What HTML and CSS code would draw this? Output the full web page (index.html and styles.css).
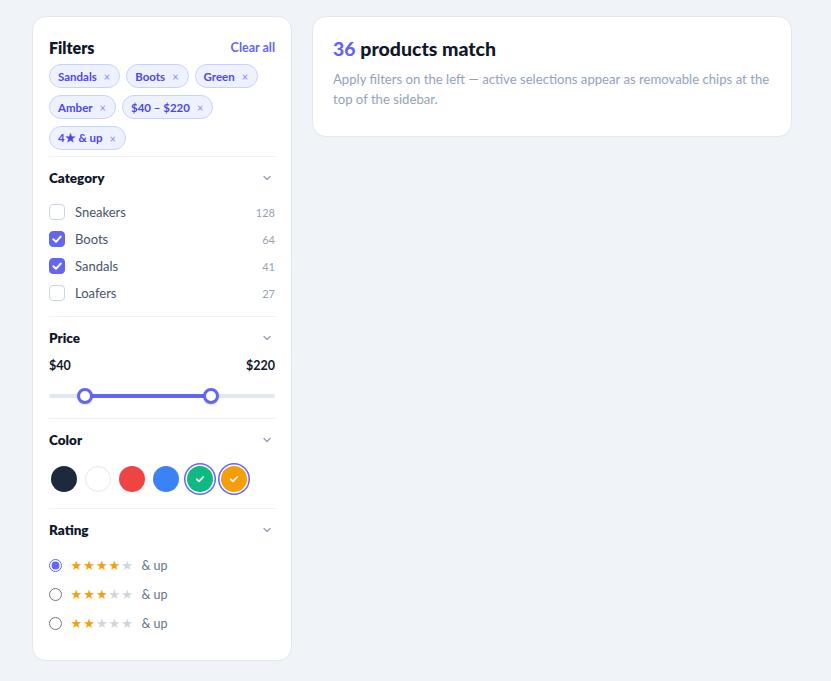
FILE: index.html
```html
<!DOCTYPE html>
<html lang="en">
<head>
<meta charset="utf-8">
<title>Filters</title>
<link rel="stylesheet" href="styles.css">
</head>
<body>
<div class="page">
  <aside class="sidebar">
    <div class="sb-head">
      <h2 class="sb-title">Filters</h2>
      <a class="clear" href="#">Clear all</a>
    </div>
    <div class="chips">
      <span class="chip">Sandals <span class="x">×</span></span>
      <span class="chip">Boots <span class="x">×</span></span>
      <span class="chip">Green <span class="x">×</span></span>
      <span class="chip">Amber <span class="x">×</span></span>
      <span class="chip">$40 – $220 <span class="x">×</span></span>
      <span class="chip">4★ &amp; up <span class="x">×</span></span>
    </div>

    <section class="sec">
      <div class="sec-head">
        <h3>Category</h3>
        <svg class="chev" width="12" height="12" viewBox="0 0 12 12"><path d="M3 4.5 6 7.5 9 4.5" fill="none" stroke="#94a3b8" stroke-width="1.4" stroke-linecap="round" stroke-linejoin="round"/></svg>
      </div>
      <ul class="checks">
        <li class="check-row"><span class="cb"></span><span class="lbl">Sneakers</span><span class="cnt">128</span></li>
        <li class="check-row"><span class="cb on"><svg width="16" height="16" viewBox="0 0 16 16"><path d="M4.3 8.3 7 10.8 11.7 5.6" fill="none" stroke="#fff" stroke-width="2" stroke-linecap="round" stroke-linejoin="round"/></svg></span><span class="lbl">Boots</span><span class="cnt">64</span></li>
        <li class="check-row"><span class="cb on"><svg width="16" height="16" viewBox="0 0 16 16"><path d="M4.3 8.3 7 10.8 11.7 5.6" fill="none" stroke="#fff" stroke-width="2" stroke-linecap="round" stroke-linejoin="round"/></svg></span><span class="lbl">Sandals</span><span class="cnt">41</span></li>
        <li class="check-row"><span class="cb"></span><span class="lbl">Loafers</span><span class="cnt">27</span></li>
      </ul>
    </section>

    <section class="sec">
      <div class="sec-head">
        <h3>Price</h3>
        <svg class="chev" width="12" height="12" viewBox="0 0 12 12"><path d="M3 4.5 6 7.5 9 4.5" fill="none" stroke="#94a3b8" stroke-width="1.4" stroke-linecap="round" stroke-linejoin="round"/></svg>
      </div>
      <div class="price-vals"><span>$40</span><span>$220</span></div>
      <div class="slider">
        <div class="track"></div>
        <div class="fill" style="left:36px;width:126px"></div>
        <span class="thumb" style="left:28px"></span>
        <span class="thumb" style="left:154px"></span>
      </div>
    </section>

    <section class="sec">
      <div class="sec-head">
        <h3>Color</h3>
        <svg class="chev" width="12" height="12" viewBox="0 0 12 12"><path d="M3 4.5 6 7.5 9 4.5" fill="none" stroke="#94a3b8" stroke-width="1.4" stroke-linecap="round" stroke-linejoin="round"/></svg>
      </div>
      <div class="swatches">
        <span class="sw c-dark"></span>
        <span class="sw c-white"></span>
        <span class="sw c-red"></span>
        <span class="sw c-blue"></span>
        <span class="sw c-green sel"><svg width="12" height="12" viewBox="0 0 12 12"><path d="M2.6 6.2 5 8.4 9.4 3.8" fill="none" stroke="#fff" stroke-width="1.6" stroke-linecap="round" stroke-linejoin="round"/></svg></span>
        <span class="sw c-amber sel"><svg width="12" height="12" viewBox="0 0 12 12"><path d="M2.6 6.2 5 8.4 9.4 3.8" fill="none" stroke="#fff" stroke-width="1.6" stroke-linecap="round" stroke-linejoin="round"/></svg></span>
      </div>
    </section>

    <section class="sec">
      <div class="sec-head">
        <h3>Rating</h3>
        <svg class="chev" width="12" height="12" viewBox="0 0 12 12"><path d="M3 4.5 6 7.5 9 4.5" fill="none" stroke="#94a3b8" stroke-width="1.4" stroke-linecap="round" stroke-linejoin="round"/></svg>
      </div>
      <ul class="ratings">
        <li class="rate-row"><input type="radio" name="r" checked><span class="stars"><i class="st">★</i><i class="st">★</i><i class="st">★</i><i class="st">★</i><i class="st off">★</i></span><span class="up">&amp; up</span></li>
        <li class="rate-row"><input type="radio" name="r"><span class="stars"><i class="st">★</i><i class="st">★</i><i class="st">★</i><i class="st off">★</i><i class="st off">★</i></span><span class="up">&amp; up</span></li>
        <li class="rate-row"><input type="radio" name="r"><span class="stars"><i class="st">★</i><i class="st">★</i><i class="st off">★</i><i class="st off">★</i><i class="st off">★</i></span><span class="up">&amp; up</span></li>
      </ul>
    </section>
  </aside>

  <main class="results">
    <h1 class="res-title"><span class="num">36</span> products match</h1>
    <p class="res-text">Apply filters on the left — active selections appear as removable chips at the top of the sidebar.</p>
  </main>
</div>
</body>
</html>
```

FILE: styles.css
```css
* { box-sizing: border-box; }
html, body { margin: 0; padding: 0; }
body {
  background: #f0f3f8;
  font-family: Lato, "Liberation Sans", sans-serif;
  color: #0f172a;
}
.page {
  display: flex;
  align-items: flex-start;
  gap: 20px;
  padding: 16px 32px;
}
.sidebar {
  width: 260px;
  flex: none;
  background: #fff;
  border: 1px solid #e2e8f0;
  border-radius: 14px;
  padding: 21px 16px 14px;
}
.sb-head {
  display: flex;
  justify-content: space-between;
  align-items: center;
  height: 18px;
}
.sb-title {
  margin: 0;
  font-size: 16px;
  font-weight: 800;
  color: #0f172a;
}
.clear {
  font-size: 12.5px;
  font-weight: 700;
  color: #6366f1;
  text-decoration: none;
}
.chips {
  display: flex;
  flex-wrap: wrap;
  gap: 7px 6px;
  margin-top: 8px;
  margin-bottom: 6px;
}
.chip {
  display: inline-flex;
  align-items: center;
  gap: 7px;
  height: 24px;
  padding: 0 9px 0 8px;
  background: #eef2ff;
  border: 1px solid #c7d2fe;
  border-radius: 999px;
  font-size: 11.5px;
  font-weight: 700;
  color: #4f46e5;
}
.chip .x {
  font-weight: 400;
  font-size: 11px;
  color: #818cf8;
}
.sec {
  border-top: 1px solid #eef1f5;
  padding: 13px 0 13px;
}
.sec-head {
  display: flex;
  justify-content: space-between;
  align-items: center;
  height: 16px;
}
.sec-head h3 {
  margin: 0;
  font-size: 13.5px;
  font-weight: 800;
  color: #0f172a;
}
.chev { margin-right: 2px; }
.checks, .ratings {
  list-style: none;
  margin: 0;
  padding: 0;
}
.checks {
  margin-top: 16px;
  display: flex;
  flex-direction: column;
  gap: 7px;
}
.check-row {
  display: flex;
  align-items: center;
  height: 20px;
}
.cb {
  width: 16px;
  height: 16px;
  border: 1.5px solid #cbd5e1;
  border-radius: 4px;
  background: #fff;
  flex: none;
  display: flex;
  align-items: center;
  justify-content: center;
}
.cb.on {
  background: #6366f1;
  border-color: #6366f1;
}
.cb svg { flex: none; }
.lbl {
  margin-left: 10px;
  font-size: 13px;
  color: #475569;
  flex: 1;
}
.cnt {
  font-size: 11px;
  color: #94a3b8;
}
.price-vals {
  display: flex;
  justify-content: space-between;
  margin-top: 12px;
  height: 16px;
  line-height: 16px;
  font-size: 12.5px;
  font-weight: 700;
  color: #0f172a;
}
.slider {
  position: relative;
  height: 16px;
  margin-top: 14px;
  margin-bottom: 1px;
}
.track {
  position: absolute;
  left: 0;
  right: 0;
  top: 6px;
  height: 4px;
  border-radius: 2px;
  background: #e2e8f0;
}
.fill {
  position: absolute;
  top: 6px;
  height: 4px;
  background: #6366f1;
}
.thumb {
  position: absolute;
  top: 0;
  width: 16px;
  height: 16px;
  border-radius: 50%;
  background: #fff;
  border: 3px solid #6366f1;
  box-shadow: 0 1px 2px rgba(15, 23, 42, 0.15);
}
.swatches {
  display: flex;
  gap: 8px;
  margin-top: 18px;
  padding-left: 2px;
  padding-bottom: 3px;
}
.sw {
  width: 26px;
  height: 26px;
  border-radius: 50%;
  display: flex;
  align-items: center;
  justify-content: center;
  flex: none;
}
.sw.sel {
  box-shadow: 0 0 0 1.5px #fff, 0 0 0 3px #6366f1;
}
.c-dark { background: #1e293b; }
.c-white { background: #fff; border: 1px solid #e2e8f0; }
.c-red { background: #ef4444; }
.c-blue { background: #3b82f6; }
.c-green { background: #10b981; }
.c-amber { background: #f59e0b; }
.ratings {
  margin-top: 17px;
  display: flex;
  flex-direction: column;
  gap: 9px;
}
.rate-row {
  display: flex;
  align-items: center;
  height: 20px;
}
.rate-row input {
  margin: 0;
  width: 13px;
  height: 13px;
  accent-color: #6366f1;
  flex: none;
}
.stars {
  display: inline-flex;
  margin-left: 8px;
}
.st {
  font-style: normal;
  display: inline-block;
  width: 12.7px;
  text-align: center;
  font-size: 13px;
  color: #f59e0b;
  font-family: "DejaVu Sans", sans-serif;
}
.st.off { color: #d1d5db; }
.up {
  margin-left: 8px;
  font-size: 12.5px;
  color: #64748b;
}
.results {
  width: 480px;
  flex: none;
  background: #fff;
  border: 1px solid #e2e8f0;
  border-radius: 14px;
  padding: 20px 20px 27px;
}
.res-title {
  margin: 0;
  font-size: 19.5px;
  line-height: 24px;
  font-weight: 900;
  color: #0f172a;
}
.num { color: #6366f1; }
.res-text {
  margin: 8px 0 0;
  font-size: 13.15px;
  line-height: 20px;
  color: #94a3b8;
}
```
